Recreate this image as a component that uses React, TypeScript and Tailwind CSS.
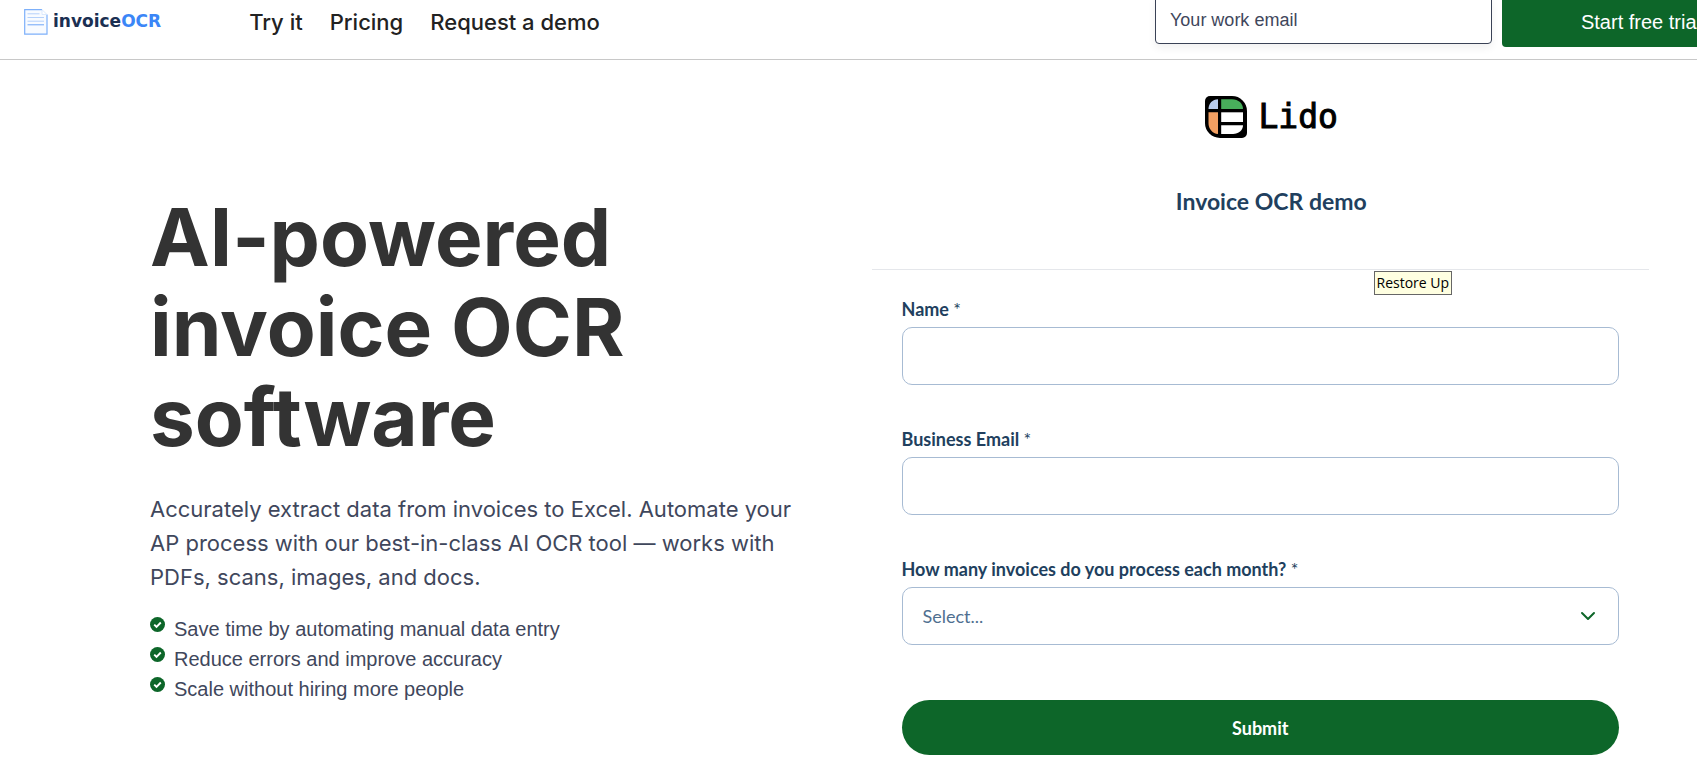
import type { ReactNode } from 'react';
import { ChevronDown } from 'lucide-react';

const navLinks = ['Try it', 'Pricing', 'Request a demo'];

const benefits = [
  'Save time by automating manual data entry',
  'Reduce errors and improve accuracy',
  'Scale without hiring more people',
];

const volumes = ['Under 100', '100 - 500', '500 - 1,000', 'More than 1,000'];

function InvoiceIcon() {
  return (
    <svg width="24" height="26" viewBox="0 0 24 26" fill="none" aria-hidden="true">
      <path d="M.7.7h17.5l4.8 4.8v19.6H.7z" fill="#f8fbff" />
      <path d="M18 .7H.7v24.4H23V5.5" stroke="#7db0fa" strokeWidth="1.2" />
      <path d="M18 .7v4.8h5z" fill="#fff" stroke="#d3e4fd" strokeWidth=".8" />
      <path d="M3.5 4.8h12M3.5 8.5h16.5M3.5 12.2h16.5" stroke="#b5d1fb" strokeWidth="1" />
      <path d="M3.5 15.8h16.5" stroke="#6ea6f8" strokeWidth="1" />
    </svg>
  );
}

function LidoMark() {
  return (
    <svg width="42" height="42" viewBox="0 0 42 42" aria-hidden="true">
      <path d="M5 0h22a15 15 0 0 1 15 15v22a5 5 0 0 1-5 5H15A15 15 0 0 1 0 27V5a5 5 0 0 1 5-5z" fill="#000" />
      <path d="M13 3.2V13H3.5C3.5 7.5 7.5 3.2 13 3.2z" fill="#b9ccec" />
      <path d="M16.2 3.2H27C33.5 3.2 38 7.5 38 13H16.2z" fill="#48ae5b" />
      <path d="M3.5 16.3H13V38C7.5 37.5 3.5 33 3.5 27z" fill="#f3a062" />
      <path d="M16.2 16.3H38V26H16.2z" fill="#fff" />
      <path d="M16.2 29.3H38C38 34.5 33.5 38 28 38H16.2z" fill="#fff" />
    </svg>
  );
}

function CheckBadge() {
  return (
    <svg className="mt-[3px] shrink-0" width="15" height="15" viewBox="0 0 15 15" aria-hidden="true">
      <circle cx="7.5" cy="7.5" r="7.5" fill="#0d6629" />
      <path d="M4.2 7.6l2.3 2.2 4.3-4.3" fill="none" stroke="#fff" strokeWidth="1.9" />
    </svg>
  );
}

function Field({ id, label, children }: { id: string; label: string; children: ReactNode }) {
  return (
    <div className="flex flex-col gap-[6px]">
      <label htmlFor={id} className="text-lg leading-6 font-bold text-[#213f5e]">
        {label} <span className="font-normal">*</span>
      </label>
      {children}
    </div>
  );
}

export default function App() {
  return (
    <div className="min-h-screen bg-white font-['Inter',sans-serif]">
      <header className="flex h-[60px] items-start overflow-hidden border-b border-[#c8c8c8] pl-6">
        <a href="#" className="flex h-11 shrink-0 items-center gap-[5px]">
          <InvoiceIcon />
          <span className="font-['DejaVu_Sans',sans-serif] text-[17px] font-bold text-[#1b2f52]">
            invoice<span className="text-[#3b86f7]">OCR</span>
          </span>
        </a>
        <nav className="ml-[88px] flex h-11 shrink-0 items-center gap-[27px] text-[22px] font-medium text-[#222]">
          {navLinks.map((link) => (
            <a key={link} href="#">{link}</a>
          ))}
        </nav>
        <form className="-mt-1 -mr-[83px] ml-auto flex shrink-0 items-start gap-[10px] font-['Liberation_Sans',sans-serif]">
          <input
            type="email"
            aria-label="Your work email"
            placeholder="Your work email"
            className="h-12 w-[337px] rounded border border-[#3a4256] px-[14px] text-lg shadow-[0_4px_8px_rgba(0,0,0,0.06)] placeholder:text-[#3f475c]"
          />
          <button type="button" className="h-[51px] w-[278px] rounded bg-[#0d6629] text-xl text-white">
            Start free trial
          </button>
        </form>
      </header>

      <main className="grid grid-cols-2">
        <section className="pt-[132px] pr-7 pl-[150px]">
          <h1 className="text-[80px] leading-[90px] font-bold text-[#333]">AI-powered invoice OCR software</h1>
          <p className="mt-[30px] text-[22px] leading-[34px] text-[#3f475c]">
            Accurately extract data from invoices to Excel. Automate your AP process with our best-in-class AI OCR
            tool — works with PDFs, scans, images, and docs.
          </p>
          <ul className="mt-5 font-['Liberation_Sans',sans-serif] text-xl leading-[30px] text-[#3f475c]">
            {benefits.map((benefit) => (
              <li key={benefit} className="flex gap-[9px]">
                <CheckBadge />
                {benefit}
              </li>
            ))}
          </ul>
        </section>

        <section className="relative pt-9 pr-12 pl-[23px] font-['Lato',sans-serif]">
          <div className="flex flex-col items-center border-b border-[#e5e7eb] pb-[53px] pl-[22px]">
            <div className="flex items-center gap-3">
              <LidoMark />
              <span className="font-['DejaVu_Sans_Mono',monospace] text-[33px] leading-[42px] text-black [-webkit-text-stroke:1px_black]">
                Lido
              </span>
            </div>
            <h2 className="mt-12 text-[23px] leading-[30px] font-bold text-[#213f5e]">Invoice OCR demo</h2>
          </div>

          <div className="absolute top-[211px] left-[525px] border border-[#666] bg-[#ffffe1] px-[2px] font-['Open_Sans',sans-serif] text-sm leading-[22px] text-black">
            Restore Up
          </div>

          <form className="flex flex-col gap-[42px] px-[30px] pt-[27px] pb-6">
            <Field id="name" label="Name">
              <input id="name" type="text" className="h-[58px] rounded-[10px] border border-[#a7bbd3] px-5 text-lg" />
            </Field>
            <Field id="email" label="Business Email">
              <input id="email" type="email" className="h-[58px] rounded-[10px] border border-[#a7bbd3] px-5 text-lg" />
            </Field>
            <Field id="volume" label="How many invoices do you process each month?">
              <div className="relative">
                <select
                  id="volume"
                  defaultValue=""
                  className="h-[58px] w-full appearance-none rounded-[10px] border border-[#a7bbd3] bg-white px-5 text-lg text-[#4f6f90]"
                >
                  <option value="">Select...</option>
                  {volumes.map((volume) => (
                    <option key={volume}>{volume}</option>
                  ))}
                </select>
                <ChevronDown className="pointer-events-none absolute top-[17px] right-[19px] size-6 text-[#0d6629]" strokeWidth={2} />
              </div>
            </Field>
            <button type="button" className="mt-[13px] h-[55px] rounded-full bg-[#0d6629] text-lg font-bold text-white">
              Submit
            </button>
          </form>
        </section>
      </main>
    </div>
  );
}
